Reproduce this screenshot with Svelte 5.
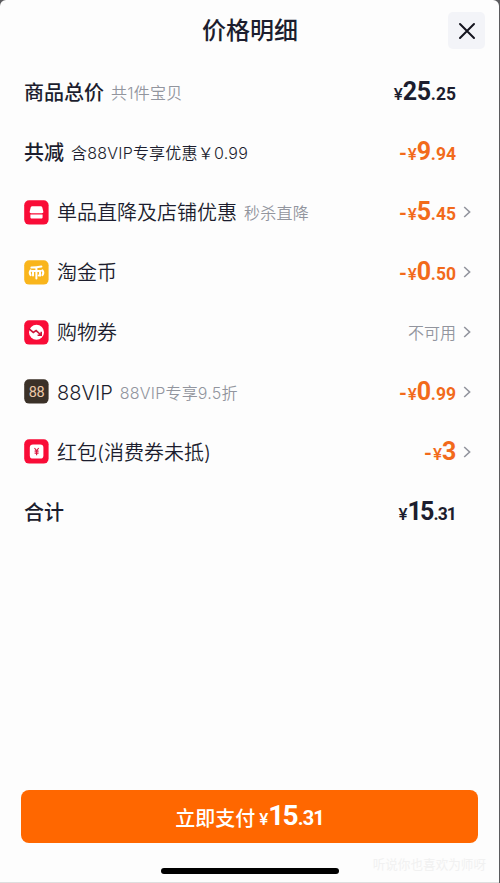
<script>
    const rows = [
        { label: "商品总价", note: "共1件宝贝", strong: true, int: "25", dec: ".25" },
        { label: "共减", note: "含88VIP专享优惠￥0.99", strong: true, darkNote: true, minus: true, int: "9", dec: ".94" },
        { icon: "shop", label: "单品直降及店铺优惠", note: "秒杀直降", minus: true, int: "5", dec: ".45", arrow: true },
        { icon: "coin", label: "淘金币", minus: true, int: "0", dec: ".50", arrow: true },
        { icon: "coupon", label: "购物券", status: "不可用", arrow: true },
        { icon: "vip", label: "88VIP", note: "88VIP专享9.5折", minus: true, int: "0", dec: ".99", arrow: true },
        { icon: "packet", label: "红包(消费券未抵)", minus: true, int: "3", dec: "", arrow: true },
        { label: "合计", strong: true, int: "15", dec: ".31" }
    ];

    const iconColors = {
        shop: "#f90c37",
        coin: "#f9b51c",
        coupon: "#f90c37",
        vip: "#3b3128",
        packet: "#f90c37"
    };
</script>

<!-- amounts with a 1 in them are set tighter -->
{#snippet price(row)}
    <span class="price" class:minus={row.minus} class:tight={row.int.includes("1")}>
        {#if row.minus}<span class="dash">-</span>{/if}<span class="yen">¥</span><span class="int">{row.int}</span>{#if row.dec}<span class="dec">{row.dec}</span>{/if}
    </span>
{/snippet}

<div class="screen">
    <div class="sheet">
        <header>
            <h1>价格明细</h1>
            <button class="close" aria-label="关闭">
                <svg width="18" height="18" viewBox="0 0 18 18">
                    <path d="M2 2L16 16M16 2L2 16" fill="none" stroke="#15151f" stroke-width="2" stroke-linecap="round" />
                </svg>
            </button>
        </header>

        <div class="rows">
            {#each rows as row}
                <div class="row">
                    {#if row.icon}
                        <svg class="icon" width="25" height="25" viewBox="0 0 25 25">
                            <rect x="0.2" y="0.2" width="24.4" height="24.4" rx="5" fill={iconColors[row.icon]} />
                            {#if row.icon === "shop"}
                                <path d="M8.6 6.2h7.8c1 0 1.6.5 1.9 1.4l1 3.9c.2 1-.4 1.7-1.4 1.7H7.1c-1 0-1.6-.7-1.4-1.7l1-3.9c.3-.9.9-1.4 1.9-1.4z" fill="#fff" />
                                <path d="M6.4 14.5h12.2v2.7c0 .9-.5 1.4-1.4 1.4H7.8c-.9 0-1.4-.5-1.4-1.4z" fill="#fff" />
                            {:else if row.icon === "coin"}
                                <path d="M7.4 7.6Q12.5 7.4 17.4 6.6M8.2 10.9H16.6M12.4 7.4V18.6M9 10.9V15.6M16 10.9V15.6H14.8M6.6 10.4Q4.8 12.8 6.6 15.2M18.4 10.4Q20.2 12.8 18.4 15.2" fill="none" stroke="#fff" stroke-width="2" stroke-linecap="round" />
                            {:else if row.icon === "coupon"}
                                <circle cx="12.5" cy="12.3" r="7.5" fill="#fff" />
                                <path d="M4.8 8.7L9.3 12.4L12.1 10.6L17 15M17.2 11.7V15.3H13.6" fill="none" stroke="#cc1439" stroke-width="1.6" />
                            {:else if row.icon === "vip"}
                                <text x="12.4" y="17.7" text-anchor="middle" class="vip-text">88</text>
                            {:else}
                                <rect x="5.8" y="5.6" width="13.6" height="14" rx="3.2" fill="#fff" />
                                <path d="M10.5 9L12.6 11.8L14.7 9M12.6 11.8V16.2M10.6 12.2H14.6M10.6 14.2H14.6" fill="none" stroke="#d91c43" stroke-width="1.2" />
                            {/if}
                        </svg>
                    {/if}
                    <span class="label" class:strong={row.strong}>{row.label}</span>
                    {#if row.note}
                        <span class="note" class:dark={row.darkNote}>{row.note}</span>
                    {/if}
                    <span class="value">
                        {#if row.status}
                            <span class="status">{row.status}</span>
                        {:else}
                            {@render price(row)}
                        {/if}
                    </span>
                    <span class="arrow">
                        {#if row.arrow}
                            <svg width="8" height="12" viewBox="0 0 8 12">
                                <path d="M1.2 1L6.6 6L1.2 11" fill="none" stroke="#92959e" stroke-width="1.6" />
                            </svg>
                        {/if}
                    </span>
                </div>
            {/each}
        </div>

        <button class="pay">
            <span class="pay-text">立即支付</span>
            {@render price({ int: "15", dec: ".31" })}
        </button>

        <div class="home-bar"></div>
        <span class="watermark">听说你也喜欢为师呀</span>
    </div>
</div>

<style>
    :global(body) {
        margin: 0;
    }

    .screen {
        width: 500px;
        height: 883px;
        background: #5b5b5e;
        overflow: hidden;
        font-family: Inter, "Noto Sans CJK SC", sans-serif;
        color: #1c1d2e;
    }

    .sheet {
        position: relative;
        box-sizing: border-box;
        width: 499px;
        height: 883px;
        display: flex;
        flex-direction: column;
        background: #fdfdfd;
        border-bottom: 1px solid #dedede;
        border-radius: 6px 6px 0 0;
    }

    header {
        display: grid;
        grid-template-columns: 38px 1fr 38px;
        align-items: center;
        height: 61px;
        padding: 0 13px 0 14px;
    }

    h1 {
        grid-column: 2;
        margin: 0;
        font-size: 24px;
        line-height: 36px;
        font-weight: 500;
        text-align: center;
    }

    button {
        border: 0;
        padding: 0;
        font-family: inherit;
    }

    .close {
        display: flex;
        align-items: center;
        justify-content: center;
        width: 37px;
        height: 37px;
        border-radius: 5px;
        background: #f3f4f8;
    }

    .rows {
        display: flex;
        flex-direction: column;
        padding: 2px 28px 0 24px;
    }

    .row {
        display: flex;
        align-items: center;
        height: 59.9px;
        white-space: nowrap;
    }

    .icon {
        flex: none;
        margin: -1px 8px 0 0;
    }

    .vip-text {
        font-family: Roboto, sans-serif;
        font-size: 14.5px;
        letter-spacing: -0.6px;
        fill: #ecc8a8;
    }

    .label {
        padding-top: 1px;
        font-size: 20px;
        line-height: 30px;
        font-weight: 350;
    }

    .label.strong {
        font-weight: 500;
    }

    .note {
        margin-left: 7px;
        padding-top: 1px;
        font-size: 16px;
        line-height: 24px;
        font-weight: 350;
        letter-spacing: 0.22px;
        color: #92959e;
    }

    .note.dark {
        color: #1c1d2e;
    }

    .value {
        margin-left: auto;
    }

    .status {
        display: block;
        margin-top: -2px;
        font-size: 16px;
        font-weight: 350;
        color: #92959e;
    }

    .arrow {
        display: flex;
        justify-content: flex-end;
        width: 15px;
        margin-top: -1px;
    }

    .price {
        display: flex;
        align-items: baseline;
        padding-top: 1px;
        font-family: Roboto, sans-serif;
        font-weight: 700;
        line-height: 30px;
    }

    .price.minus {
        color: #f26a1b;
    }

    .dash {
        font-size: 20px;
        margin-right: 1px;
    }

    .yen {
        font-size: 17px;
        font-weight: 500;
    }

    .int {
        font-size: 25px;
        letter-spacing: -0.3px;
    }

    .dec {
        font-size: 17.5px;
    }

    .tight .int {
        letter-spacing: -1.8px;
        margin-right: 1px;
    }

    .tight .dec {
        letter-spacing: -0.9px;
    }

    .pay {
        display: flex;
        align-items: center;
        justify-content: center;
        gap: 4px;
        height: 53px;
        margin: auto 21px 0;
        border-radius: 8px;
        background: #ff6700;
        color: #fff;
    }

    .pay-text {
        padding-top: 1px;
        font-size: 20px;
        font-weight: 500;
    }

    .pay .int {
        font-size: 28px;
    }

    .pay .dec {
        font-size: 20px;
    }

    .home-bar {
        flex: none;
        align-self: center;
        width: 178px;
        height: 6px;
        margin: 25px 0 8px;
        border-radius: 3px;
        background: #000;
    }

    .watermark {
        position: absolute;
        right: 13px;
        bottom: 8px;
        font-size: 12.6px;
        line-height: 18px;
        color: #f1f1f1;
    }
</style>
